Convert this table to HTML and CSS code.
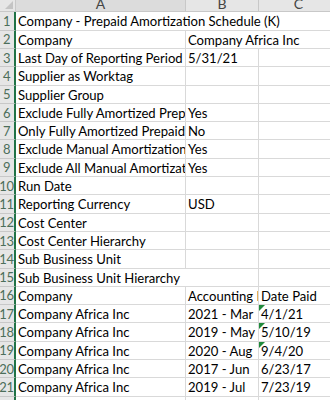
FILE: index.html
```html
<!DOCTYPE html>
<html>
<head>
<meta charset="utf-8">
<link rel="stylesheet" href="styles.css">
</head>
<body>
<div class="sheet">
  <div class="row hdr">
    <div class="rh corner"><span class="tri"></span></div>
    <div class="ch sel"><span>A</span></div>
    <div class="ch"><span>B</span></div>
    <div class="ch last"><span>C</span></div>
  </div>
  <div class="row"><div class="rh">1</div><div class="c span3">Company - Prepaid Amortization Schedule (K)</div></div>
  <div class="row"><div class="rh">2</div><div class="c">Company</div><div class="c span2b">Company Africa Inc</div></div>
  <div class="row"><div class="rh">3</div><div class="c">Last Day of Reporting Period (K)</div><div class="c">5/31/21</div><div class="c last"></div></div>
  <div class="row"><div class="rh">4</div><div class="c">Supplier as Worktag</div><div class="c"></div><div class="c last"></div></div>
  <div class="row"><div class="rh">5</div><div class="c">Supplier Group</div><div class="c"></div><div class="c last"></div></div>
  <div class="row"><div class="rh">6</div><div class="c">Exclude Fully Amortized Prepaids</div><div class="c">Yes</div><div class="c last"></div></div>
  <div class="row"><div class="rh">7</div><div class="c">Only Fully Amortized Prepaids</div><div class="c">No</div><div class="c last"></div></div>
  <div class="row"><div class="rh">8</div><div class="c">Exclude Manual Amortization</div><div class="c">Yes</div><div class="c last"></div></div>
  <div class="row"><div class="rh">9</div><div class="c">Exclude All Manual Amortizations</div><div class="c">Yes</div><div class="c last"></div></div>
  <div class="row"><div class="rh">10</div><div class="c">Run Date</div><div class="c"></div><div class="c last"></div></div>
  <div class="row"><div class="rh">11</div><div class="c">Reporting Currency</div><div class="c">USD</div><div class="c last"></div></div>
  <div class="row"><div class="rh">12</div><div class="c">Cost Center</div><div class="c"></div><div class="c last"></div></div>
  <div class="row"><div class="rh">13</div><div class="c">Cost Center Hierarchy</div><div class="c"></div><div class="c last"></div></div>
  <div class="row"><div class="rh">14</div><div class="c">Sub Business Unit</div><div class="c"></div><div class="c last"></div></div>
  <div class="row"><div class="rh">15</div><div class="c span2">Sub Business Unit Hierarchy</div><div class="c last"></div></div>
  <div class="row"><div class="rh">16</div><div class="c">Company</div><div class="c">Accounting Period</div><div class="c last">Date Paid</div></div>
  <div class="row"><div class="rh">17</div><div class="c">Company Africa Inc</div><div class="c">2021 - Mar</div><div class="c last flag">4/1/21</div></div>
  <div class="row"><div class="rh">18</div><div class="c">Company Africa Inc</div><div class="c">2019 - May</div><div class="c last flag">5/10/19</div></div>
  <div class="row"><div class="rh">19</div><div class="c">Company Africa Inc</div><div class="c">2020 - Aug</div><div class="c last flag">9/4/20</div></div>
  <div class="row"><div class="rh">20</div><div class="c">Company Africa Inc</div><div class="c">2017 - Jun</div><div class="c last">6/23/17</div></div>
  <div class="row"><div class="rh">21</div><div class="c">Company Africa Inc</div><div class="c">2019 - Jul</div><div class="c last">7/23/19</div></div>
  <div class="row"><div class="rh">22</div><div class="c"></div><div class="c"></div><div class="c last"></div></div>
</div>
</body>
</html>
```
FILE: styles.css
```css
html, body {
  margin: 0;
  padding: 0;
  background: #ffffff;
  overflow: hidden;
}
.sheet {
  width: 330px;
  height: 400px;
  overflow: hidden;
  font-family: Lato, "Liberation Sans", sans-serif;
  font-size: 13.1px;
  color: #000;
}
.row {
  display: grid;
  grid-template-columns: 16px 170px 73px 80px;
  height: 18.3px;
}
.row.hdr {
  height: 12.4px;
}
.rh {
  box-sizing: border-box;
  background: #e6e6e6;
  color: #4c6e5a;
  border-right: 2px solid #217346;
  border-bottom: 1px solid #c8c8c8;
  font-size: 13px;
  display: flex;
  align-items: center;
  justify-content: center;
  padding-right: 1px;
  letter-spacing: -0.3px;
  overflow: hidden;
}
.corner {
  border-right: 1px solid #c8c8c8;
  border-bottom: 1px solid #c8c8c8;
  background: #e6e6e6;
  position: relative;
}
.tri {
  position: absolute;
  right: 2px;
  bottom: 2px;
  width: 0;
  height: 0;
  border-left: 8px solid transparent;
  border-bottom: 8px solid #c4c4c4;
}
.ch {
  box-sizing: border-box;
  background: #e6e6e6;
  color: #444;
  border-right: 1px solid #c8c8c8;
  border-bottom: 1px solid #c8c8c8;
  display: flex;
  justify-content: center;
  align-items: flex-end;
  overflow: hidden;
  font-size: 14px;
}
.ch span {
  line-height: 14px;
  margin-bottom: 0px;
}
.ch.sel {
  background: #dcdcdc;
}
.c {
  box-sizing: border-box;
  border-right: 1px solid #d9d9d9;
  border-bottom: 1px solid #d9d9d9;
  padding-left: 2px;
  white-space: nowrap;
  overflow: hidden;
  line-height: 18px;
  position: relative;
}
.c.last {
  border-right: none;
}
.span3 {
  grid-column: 2 / span 3;
  border-right: none;
}
.span2 {
  grid-column: 2 / span 2;
}
.span2b {
  grid-column: 3 / span 2;
  border-right: none;
}
.flag::before {
  content: "";
  position: absolute;
  left: 0;
  top: 0;
  width: 0;
  height: 0;
  border-top: 6px solid #1f8a3c;
  border-right: 6px solid transparent;
}
```
